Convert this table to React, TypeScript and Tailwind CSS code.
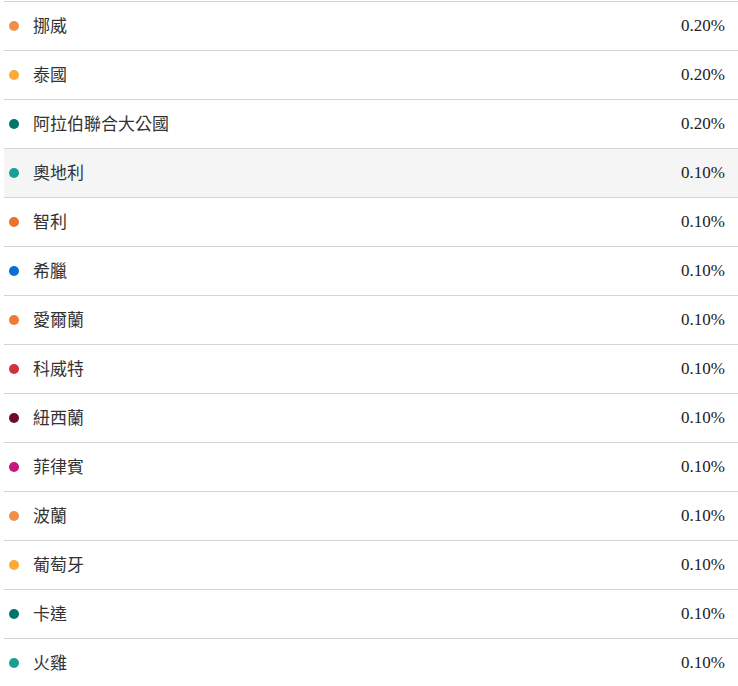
const rows = [
  { name: '挪威', color: 'bg-[#f28e4c]', value: '0.20%' },
  { name: '泰國', color: 'bg-[#fca93a]', value: '0.20%' },
  { name: '阿拉伯聯合大公國', color: 'bg-[#00766b]', value: '0.20%' },
  { name: '奧地利', color: 'bg-[#1a9e94]', value: '0.10%', active: true },
  { name: '智利', color: 'bg-[#ec712b]', value: '0.10%' },
  { name: '希臘', color: 'bg-[#0a6fce]', value: '0.10%' },
  { name: '愛爾蘭', color: 'bg-[#f07a35]', value: '0.10%' },
  { name: '科威特', color: 'bg-[#d13438]', value: '0.10%' },
  { name: '紐西蘭', color: 'bg-[#6b0a2a]', value: '0.10%' },
  { name: '菲律賓', color: 'bg-[#c5197d]', value: '0.10%' },
  { name: '波蘭', color: 'bg-[#f28e4c]', value: '0.10%' },
  { name: '葡萄牙', color: 'bg-[#fca93a]', value: '0.10%' },
  { name: '卡達', color: 'bg-[#00766b]', value: '0.10%' },
  { name: '火雞', color: 'bg-[#1a9e94]', value: '0.10%' },
];

const App = () => {
  return (
    <div className="h-[686px] w-[738px] overflow-hidden bg-white pl-1 pt-px">
      <ul className="flex flex-col">
        {rows.map((row) => (
          <li
            key={row.name}
            className={`flex h-[49px] items-center justify-between border-t border-[#d4d4d4] pr-[13px] ${
              row.active ? 'bg-[#f5f5f5]' : 'bg-white'
            }`}
          >
            <div className="flex items-center">
              <span className={`ml-[5px] h-[10px] w-[10px] rounded-full ${row.color}`} />
              <span className="ml-[14px] -translate-y-[2px] text-[17px] leading-none text-[#333] font-['Noto_Sans_CJK_TC',sans-serif]">
                {row.name}
              </span>
            </div>
            <span className="-translate-y-px text-[17px] leading-none text-[#222] font-['Liberation_Serif',serif]">
              {row.value}
            </span>
          </li>
        ))}
      </ul>
    </div>
  );
};

export default App;
